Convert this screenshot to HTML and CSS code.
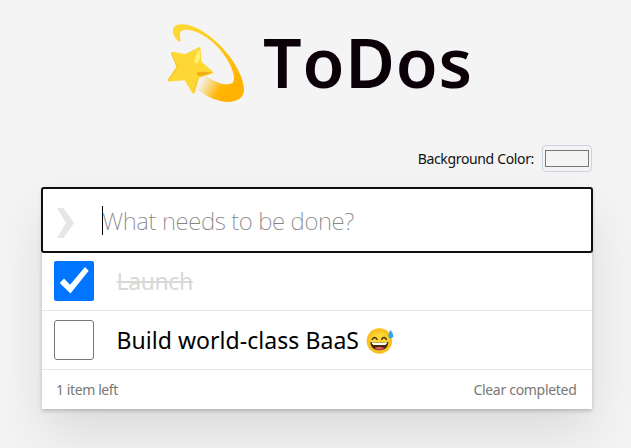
FILE: index.html
```html
<!DOCTYPE html>
<html lang="en">
<head>
<meta charset="utf-8">
<title>ToDos</title>
<link rel="stylesheet" href="styles.css">
</head>
<body>
<main class="page">
  <h1 class="title">
    <svg class="comet" viewBox="0 0 330 330" aria-hidden="true">
      <defs>
        <linearGradient id="trail" gradientUnits="userSpaceOnUse" x1="70" y1="60" x2="235" y2="230">
          <stop offset="0" stop-color="#fdd835"/>
          <stop offset=".45" stop-color="#fec91b"/>
          <stop offset="1" stop-color="#ffb300"/>
        </linearGradient>
        <linearGradient id="fade" gradientUnits="userSpaceOnUse" x1="130" y1="205" x2="193" y2="238">
          <stop offset="0" stop-color="#f4f4f4"/>
          <stop offset=".2" stop-color="#f4f4f4" stop-opacity=".9"/>
          <stop offset="1" stop-color="#f4f4f4" stop-opacity="0"/>
        </linearGradient>
      </defs>
      <path fill="url(#trail)" d="M73 95C62 88 54 75 54 63C54 47 69 42 84 43C124 44 179 84 218 132C245 166 266 207 267 238C267 263 248 276 218 276C187 276 150 258 122 235L149 194C170 210 194 223 216 223C233 223 238 217 237 202C234 170 205 124 170 94C141 69 105 56 87 60C73 63 73 73 77 92Z"/>
      <path fill="url(#fade)" d="M149 190L200 215V276H190C161 271 139 254 118 237Z"/>
      <path fill="#fdd835" stroke="#fdd835" stroke-width="7" stroke-linejoin="round" d="M52 129L92 136L133 115L136 156L171 187L130 201L115 247L91 207L41 211L68 171Z"/>
      <path fill="#fff176" d="M130 121C135 119 137 137 133 149C130 158 123 162 119 158C117 150 124 132 130 121Z"/>
      <path fill="#f4ad16" d="M128 187C140 184 160 186 172 188L139 198C129 200 120 192 128 187Z"/>
      <path fill="none" stroke="#fbc02d" stroke-width="3" d="M49 130L68 171L41 209L46 213M117 246L125 215"/>
    </svg>
    <span class="title-text">ToDos</span>
  </h1>
  <div class="settings">
    <span class="settings-label">Background Color:</span>
    <span class="swatch"><span class="swatch-color"></span></span>
  </div>
  <section class="card">
    <div class="entry">
      <svg class="chevron" viewBox="0 0 17 30" aria-hidden="true"><path d="M0 0H6.500L17 15L6.500 30H0L9 15Z"/></svg>
      <span class="caret"></span>
      <span class="placeholder">What needs to be done?</span>
    </div>
    <ul class="list">
      <li class="item">
        <span class="check checked"><svg viewBox="0 0 40 40" aria-hidden="true"><path d="M5.700 22L10 17.500L16 23.800L31 6L34.700 9.700L16.500 32.500Z" fill="#fff"/></svg></span>
        <span class="item-text done">Launch</span>
      </li>
      <li class="item">
        <span class="check"></span>
        <span class="item-text">Build world-class BaaS</span>
        <svg class="emoji" viewBox="0 0 84 78" aria-hidden="true">
          <defs><radialGradient id="face"><stop offset=".5" stop-color="#fdd835"/><stop offset="1" stop-color="#f9b919"/></radialGradient></defs>
          <circle cx="40" cy="39" r="38" fill="url(#face)"/>
          <path d="M19 34Q26 23 33 34M47 34Q54 23 61 34" fill="none" stroke="#422b0d" stroke-width="4.500" stroke-linecap="round"/>
          <path d="M13 42Q40 46 67 42C66 59 55 67 40 67C25 67 14 59 13 42Z" fill="#422b0d"/>
          <path d="M17 43Q40 47 63 43Q63 51 57 51H23Q17 51 17 43Z" fill="#fff"/>
          <path d="M25 61Q40 52 55 61Q40 70 25 61Z" fill="#ed5264"/>
          <path d="M73 5Q83 18 82 25C80 34 67 32 67 23Q68 15 73 5Z" fill="#35a5e8"/>
        </svg>
      </li>
    </ul>
    <footer class="footer">
      <span class="count">1 item left</span>
      <span class="clear">Clear completed</span>
    </footer>
  </section>
</main>
</body>
</html>
```
FILE: styles.css
```css
* { box-sizing: border-box; }
body {
  margin: 0;
  height: 448px;
  overflow: hidden;
  background: #f4f4f4;
  color: #111;
  font-family: "Noto Sans", "Open Sans", sans-serif;
}
.page { width: 550px; margin-left: 42px; }
.title {
  display: flex;
  height: 145px;
  margin: 0;
  padding: 10px 0 0 113px;
  color: #0b0008;
  font-size: 68px;
  line-height: 103px;
}
.comet { flex: none; width: 110px; height: 110px; }
.title-text {
  margin-left: -2px;
  font-weight: 600;
  font-kerning: none;
  letter-spacing: .8px;
  white-space: nowrap;
}
.settings { display: flex; height: 27px; justify-content: flex-end; gap: 8px; }
.settings-label { font-size: 14px; line-height: 28px; letter-spacing: -.35px; white-space: nowrap; }
.swatch {
  width: 50px;
  height: 27px;
  padding: 4px 2px;
  border: 1px solid #cdd3de;
  border-radius: 4px;
}
.swatch-color { display: block; height: 17px; border: 1px solid #777; background: #f4f4f4; }
.card {
  height: 221px;
  margin-top: 16px;
  background: #fff;
  box-shadow: 0 2px 4px rgba(0,0,0,.2), 0 25px 50px rgba(0,0,0,.1);
}
.entry {
  display: flex;
  align-items: center;
  height: 64px;
  padding-left: 15px;
  outline: 2px solid #101010;
  outline-offset: -1px;
  border-radius: 2px;
}
.chevron { width: 17px; height: 30px; margin-top: 6px; fill: #e6e6e6; }
.caret { width: 1px; height: 29px; margin: 1px 0 0 28px; background: #000; }
.placeholder {
  margin-left: -1px;
  padding-top: 1px;
  color: #858585;
  font-size: 24px;
  font-weight: 200;
  letter-spacing: -.37px;
  white-space: nowrap;
}
.list { margin: 0; padding: 0; list-style: none; }
.item {
  display: flex;
  align-items: center;
  height: 59px;
  padding-left: 12px;
  border-bottom: 1px solid #e6e6e6;
}
.check { width: 40px; height: 40px; border: 1px solid #767676; border-radius: 3px; }
.checked { border: 0; border-radius: 2px; background: #0075ff; }
.checked svg { display: block; width: 40px; height: 40px; }
.item-text { margin-left: 22.500px; color: #000; font-size: 23px; letter-spacing: .05px; white-space: nowrap; }
.item-text.done { color: #d9d9d9; letter-spacing: -.4px; text-decoration: line-through; }
.emoji { width: 28px; height: 26px; margin: 1px 0 0 7px; }
.footer {
  display: flex;
  justify-content: space-between;
  padding: 0 15.500px 0 14px;
  color: #777;
  font-size: 14px;
  line-height: 39px;
}
.count { letter-spacing: -.4px; }
.clear { letter-spacing: -.3px; }
```
